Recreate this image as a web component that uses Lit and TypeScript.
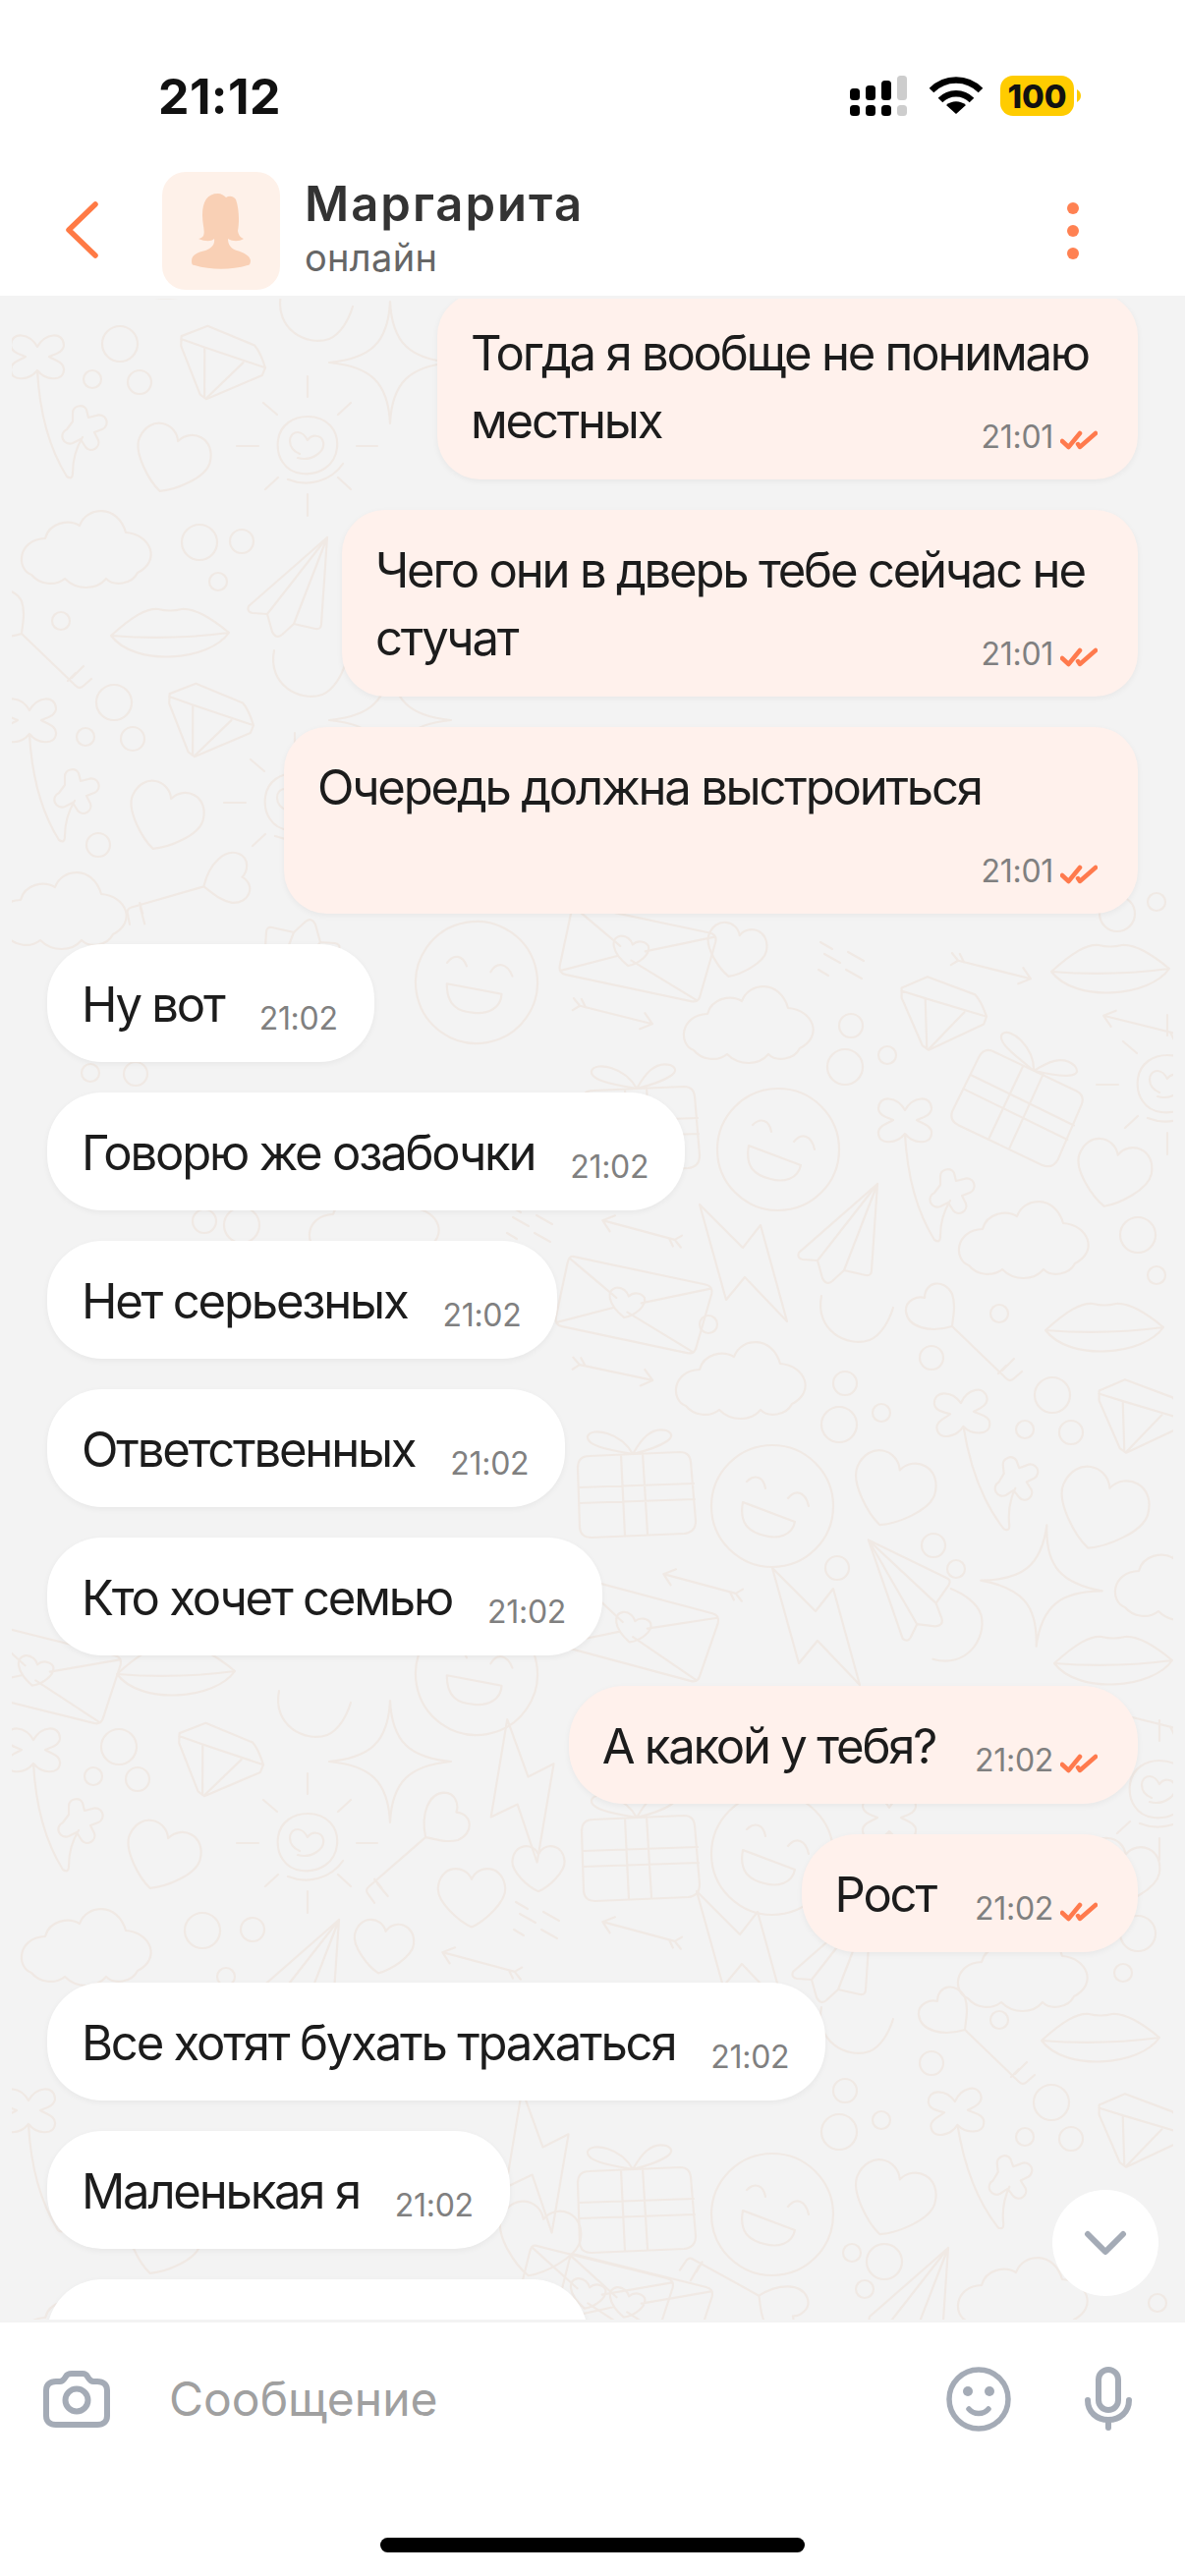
import { LitElement, html, css, svg } from "lit";
import { customElement } from "lit/decorators.js";

type Msg = { out: boolean; lines: string[]; time: string; width?: number };

const MSGS: Msg[] = [
  { out: true, lines: ["Тогда я вообще не понимаю", "местных"], time: "21:01", width: 713 },
  { out: true, lines: ["Чего они в дверь тебе сейчас не", "стучат"], time: "21:01", width: 810 },
  { out: true, lines: ["Очередь должна выстроиться"], time: "21:01", width: 869 },
  { out: false, lines: ["Ну вот"], time: "21:02" },
  { out: false, lines: ["Говорю же озабочки"], time: "21:02" },
  { out: false, lines: ["Нет серьезных"], time: "21:02" },
  { out: false, lines: ["Ответственных"], time: "21:02" },
  { out: false, lines: ["Кто хочет семью"], time: "21:02" },
  { out: true, lines: ["А какой у тебя?"], time: "21:02" },
  { out: true, lines: ["Рост"], time: "21:02" },
  { out: false, lines: ["Все хотят бухать трахаться"], time: "21:02" },
  { out: false, lines: ["Маленькая я"], time: "21:02" },
];

const SHAPES: Record<string, string> = {
  cloud:
    "M-60 26C-76 20-74-10-46-11C-42-27-22-31-11-24C-4-44 28-46 36-17C62-15 72 12 48 24C42 36 24 38 16 30C6 42-14 42-26 30C-36 38-52 36-60 26Z",
  heart:
    "M0-18C-8-36-36-34-38-8C-39 8-14 30 0 36C14 30 39 8 38-8C36-34 8-36 0-18Z",
  smiley:
    "M62 0A62 62 0 1 1-62 0A62 62 0 1 1 62 0ZM-26-25C-18-33-9-30-7-18M16-8C24-18 34-14 37 0M-30-4L23 16C20 30 6 34-8 30C-24 26-34 18-30-4Z",
  gift:
    "M-46-30L46-34Q56-34 57-24L62 36Q62 48 50 49L-44 53Q-55 53-56 43L-58-18Q-58-30-46-30ZM-14-31L-10 51M8-33L13 49M-57 2L60 -2M-57 18L61 14M-2-32C-24-36-50-40-48-50C-44-60-14-54-2-32C6-46 16-60 32-56C46-50 30-40-2-32Z",
  envelope:
    "M-72-36L66-36Q74-36 74-28L70 28Q70 36 62 36L-68 36Q-76 36-76 28L-76-28Q-76-36-72-36ZM72-33L6-4M68 34L-6 8M-74-33L-20-4M-74 33L-20 6M-8 14C-28 4-32-10-22-14C-16-16-10-12-8-8C-4-14 4-14 8-10C12-2 2 10-8 14Z",
  plane:
    "M40-52L-40 18Q-42 24-36 25L-21 26L-16 44Q-12 52-6 47L6 36L28 41Q34 42 34 36ZM40-52L-21 26M40-52L6 36",
  bolt: "M-46-59L-19 38L0 15L43 60L16-38L-2-15Z",
  diamond:
    "M-44-23L-19-37L31-24Q38-18 45-3L43 5L-10 37L-17 33L-43-13ZM-44-20L-19-15L45-3M-19-15L-12 36M22-5L-10 36",
  clover:
    "M0-10C-8-24-26-26-27-12C-27-4-16-2-12 0C-18 4-28 6-27 14C-26 26-8 24 0 14C8 24 26 26 27 14C28 6 18 4 12 0C16-2 27-4 27-12C26-26 8-24 0-10ZM0 14C2 52 10 90 30 122Q36 126 36 118C36 104 40 92 46 82M36 66L36 58A7.5 7.5 0 0 1 50 54L52 62L60 60A7.5 7.5 0 0 1 66 74L58 77L62 85A7.5 7.5 0 0 1 49 92L44 84L36 88A7.5 7.5 0 0 1 30 74Z",
  lips:
    "M-60 0C-38-20-24-28-12-27Q0-24 12-27C26-28 42-18 60-3C40 26-36 32-60 0ZM-60 0Q0 5 60-3",
  key:
    "M23 21C0 28-22 22-24 6C-25-6-12-10-5-8C-5-25 15-28 23-12C27 0 24 10 23 21ZM23 21L78 74Q82 78 86 74L94 67M78 61L70 69M86 54L74 66",
  sun:
    "M0-30C20-30 32-16 30 2C28 20 12 30-6 28C-24 26-32 10-30-6C-28-22-14-30 0-30ZM-20 34C0 42 24 36 36 18M-8 8C-22 2-20-14-10-14C-6-14-2-10 0-6C4-12 14-12 16-4C18 6 4 16-10 12M0-71L0-50M0 49L0 71M-72 0L-50 0M50 0L71 0M-45-44L-31-32M44-44L31-32M-43 44L-30 32M44 44L31 32",
  star: "M0-62C2-20 20-4 62 0C20 4 2 20 0 62C-2 20-20 4-62 0C-20-4-2-20 0-62Z",
  arrow: "M-38 0L38 0M28-9L38 0L27 8M-38 0L-46-6M-32 0L-38-7M-38 0L-44 6",
  moon: "M-31-25C-38 10-5 28 18 20C30 15 38 0 42-13",
  dashes: "M-20-20L-8-13M-16-8L0 1M8-10L24-1M-22 8L-12 14M6 8L22 17",
};

type Item = [string, number, number, number?, number?];

const ITEMS: Item[] = [
  // upper left
  ["lips", 173, 282], ["clover", 38, 363], ["diamond", 225, 371, 8], ["star", 397, 369], ["moon", 317, 325],
  ["sun", 313, 454], ["heart", 175, 466, 20], ["cloud", 92, 559], ["plane", 293, 599], ["lips", 173, 647],
  ["key", -1, 624], ["moon", 310, 687], ["clover", 30, 733], ["diamond", 213, 735, 8], ["star", 397, 733],
  ["heart", 168, 830, 20], ["sun", 300, 817], ["key", 237, 893, 120], ["cloud", 67, 927], ["plane", 305, 985, 180],
  // middle right
  ["smiley", 485, 1000, -10], ["smiley", 792, 1170], ["smiley", 786, 1533], ["cloud", 766, 1043], ["cloud", 758, 1405],
  ["cloud", 1046, 1262], ["cloud", 1205, 1610], ["cloud", 385, 1247], ["diamond", 959, 1033, 6], ["diamond", 1160, 1443, 6],
  ["gift", 1039, 1119, 28], ["gift", 646, 1512], ["gift", 650, 1140], ["lips", 1130, 989], ["lips", 1124, 1354],
  ["lips", 1133, 1693], ["plane", 853, 1257], ["plane", 917, 1624, -68], ["bolt", 758, 1285], ["bolt", 832, 1655],
  ["clover", 921, 1140], ["clover", 979, 1438, -6], ["key", 946, 1329], ["heart", 1133, 1193, 15], ["heart", 909, 1515, 20, 1.1],
  ["heart", 1122, 1535, 20, 1.2], ["heart", 749, 966, 15, 0.8], ["star", 1060, 1614, 5], ["envelope", 650, 971, 12],
  ["envelope", 646, 1329, 12], ["envelope", 652, 1660, 15], ["arrow", 1012, 987, 14], ["arrow", 627, 1033, 14],
  ["arrow", 650, 1252, 195], ["arrow", 627, 1397, 12], ["arrow", 712, 1612, 195], ["arrow", 1160, 1043, 194],
  ["moon", 867, 1344], ["moon", 977, 1660, -85], ["sun", 1188, 1104], ["dashes", 855, 979], ["dashes", 538, 1247],
  // lower right
  ["lips", 1120, 2077], ["key", 959, 2045], ["smiley", 786, 2254], ["gift", 646, 2240], ["gift", 650, 1882],
  ["smiley", 786, 1887], ["moon", 867, 2068], ["bolt", 755, 1984], ["plane", 847, 1989], ["envelope", 646, 2347, 14],
  ["diamond", 1160, 2170, 6], ["clover", 973, 2149, -6], ["heart", 909, 2237, 20, 1.1], ["cloud", 1045, 2337],
  ["cloud", 1045, 2008], ["arrow", 1160, 1750, 194], ["sun", 1180, 1822], ["arrow", 650, 1966, 195], ["heart", 1141, 1905, 15],
  ["clover", 905, 1850], ["plane", 925, 2340], ["key", 800, 2351, 165],
  // lower left
  ["lips", 179, 1704], ["smiley", 485, 1704, -10], ["moon", 315, 1746], ["clover", 34, 1781], ["diamond", 223, 1793, 8],
  ["star", 397, 1793], ["bolt", 533, 1823, 25], ["key", 456, 1849, 95], ["heart", 165, 1888, 20], ["sun", 313, 1876],
  ["heart", 548, 1900, 0, 0.7], ["heart", 480, 1929, 0, 0.9], ["dashes", 545, 1956], ["cloud", 92, 1982],
  ["heart", 390, 1980, 10, 0.8], ["arrow", 487, 1997, 195], ["plane", 305, 2006], ["envelope", 44, 1704, 14],
  ["clover", 29, 2148], ["heart", 548, 2278, 15, 1.1], ["envelope", 606, 2338, 14], ["bolt", 548, 2200, 25],
  ["heart", 165, 2280, 20], ["cloud", 92, 2370],
];

const DOTS: [number, number, number][] = [
  [122, 350, 18], [94, 386, 9], [142, 389, 12], [203, 552, 18], [246, 551, 12], [222, 592, 9], [62, 632, 9],
  [116, 715, 18], [87, 750, 9], [135, 752, 12], [100, 860, 12], [866, 1044, 12], [860, 1086, 18], [903, 1074, 9],
  [721, 1348, 9], [1158, 1257, 18], [1177, 1298, 9], [1017, 1337, 9], [948, 1382, 12], [860, 1408, 12], [854, 1450, 18],
  [897, 1438, 9], [1071, 1420, 18], [1043, 1455, 9], [1090, 1458, 12], [950, 1573, 12], [973, 1597, 9], [852, 1596, 12],
  [1177, 918, 9], [1137, 930, 18], [1017, 2056, 9], [948, 2100, 12], [860, 2128, 12], [854, 2170, 18], [897, 2158, 9],
  [1070, 2140, 18], [1043, 2175, 9], [1090, 2177, 12], [1158, 1968, 18], [1143, 2008, 9], [867, 2293, 9], [900, 2302, 18],
  [880, 2330, 9], [1178, 2344, 9], [121, 1778, 18], [95, 1808, 9], [140, 1811, 12], [206, 1965, 18], [257, 1964, 12],
  [92, 1092, 9], [138, 1093, 12], [208, 1243, 12], [246, 1247, 18], [230, 2012, 9],
];

@customElement("app-root")
export class AppRoot extends LitElement {
  static styles = css`
    :host {
      display: flex;
      flex-direction: column;
      width: 1206px;
      height: 2622px;
      background: #fff;
      font-family: Inter, "Noto Sans", sans-serif;
      color: #1c1c1c;
      overflow: hidden;
    }
    .status {
      height: 175px;
      flex: none;
      box-sizing: border-box;
      padding: 77px 106px 0 161px;
      display: flex;
      justify-content: space-between;
      align-items: flex-start;
    }
    .clock {
      font-size: 50px;
      font-weight: 700;
      line-height: 42px;
      color: #111;
      letter-spacing: 0.4px;
    }
    .sys {
      display: block;
      margin-top: -1px;
    }
    .batt-text {
      font-family: Inter, sans-serif;
      font-size: 33px;
      font-weight: 800;
    }
    .header {
      height: 126px;
      flex: none;
      box-sizing: border-box;
      padding: 0 100px 6px 60px;
      display: flex;
      align-items: flex-start;
    }
    .back {
      width: 45px;
      height: 120px;
      flex: none;
      margin-right: 60px;
    }
    .avatar {
      width: 120px;
      height: 120px;
      flex: none;
      border-radius: 24px;
      background: #fef1e9;
      margin-right: 25px;
    }
    .who {
      flex: 1;
      padding-top: 4px;
    }
    .name {
      font-size: 49px;
      font-weight: 600;
      line-height: 58px;
      color: #333;
      letter-spacing: 2px;
    }
    .sub {
      font-size: 38px;
      line-height: 44px;
      margin-top: 3px;
      color: #666;
      letter-spacing: 0.3px;
    }
    .dots {
      width: 28px;
      height: 120px;
      flex: none;
    }
    .chat {
      height: 2063px;
      flex: none;
      box-sizing: border-box;
      padding: 3px 0;
      background: #f3f3f3;
    }
    .clip {
      position: relative;
      height: 100%;
      overflow: hidden;
    }
    .wall {
      position: absolute;
      left: 12px;
      top: 0;
      fill: none;
      stroke: #f0e9e4;
      stroke-width: 2.2;
      stroke-linejoin: round;
      stroke-linecap: round;
    }
    .list {
      position: relative;
      display: flex;
      flex-direction: column;
      gap: 31px;
      padding: 0 48px;
      margin-top: -6px;
    }
    .bubble {
      box-sizing: border-box;
      height: 120px;
      padding: 27px 37px 24px 35px;
      border-radius: 56px;
      background: #fff;
      box-shadow: 0 2px 6px rgba(0, 0, 0, 0.05);
      align-self: flex-start;
      display: flex;
      gap: 36px;
      align-items: flex-start;
    }
    .bubble.out {
      background: #fff1ec;
      align-self: flex-end;
      padding-left: 34px;
      padding-right: 41px;
      gap: 40px;
    }
    .bubble.tall {
      height: 190px;
      border-radius: 44px;
      display: grid;
      grid-template-rows: 69px 69px;
      gap: 0;
    }
    .bubble.tall .text {
      grid-area: 1 / 1 / 3 / 2;
    }
    .bubble.tall .meta {
      grid-area: 2 / 1 / 3 / 2;
      justify-self: end;
      margin-top: 31px;
    }
    .bubble.stub {
      width: 550px;
    }
    .text {
      font-size: 49px;
      line-height: 69px;
      letter-spacing: -2.2px;
      white-space: nowrap;
      color: #1c1c1c;
    }
    .meta {
      display: flex;
      align-items: center;
      gap: 7px;
      margin-top: 29px;
      height: 40px;
      font-size: 32px;
      line-height: 40px;
      letter-spacing: -0.3px;
      color: #808080;
      white-space: nowrap;
    }
    .check {
      display: block;
      flex: none;
      margin-top: 6px;
    }
    .down {
      position: absolute;
      right: 27px;
      bottom: 24px;
      width: 108px;
      height: 108px;
      border-radius: 50%;
      background: #fff;
      display: flex;
      align-items: center;
      justify-content: center;
    }
    .composer {
      flex: 1;
      display: flex;
      flex-direction: column;
      align-items: center;
    }
    .row {
      width: 100%;
      box-sizing: border-box;
      height: 65px;
      margin-top: 45px;
      padding: 0 54px 0 44px;
      display: flex;
      align-items: center;
    }
    .placeholder {
      flex: 1;
      margin-left: 60px;
      font-size: 48px;
      line-height: 56px;
      color: #a0a0a0;
    }
    .ico {
      display: block;
      flex: none;
    }
    .emoji {
      margin-right: 75px;
    }
    .home {
      width: 432px;
      height: 15px;
      border-radius: 8px;
      background: #000;
      margin-top: 109px;
    }
  `;

  private chk() {
    return html`<svg class="check" width="38" height="20" viewBox="0 0 38 20" fill="none" stroke="#ff7a4d" stroke-width="4.5" stroke-linecap="round" stroke-linejoin="round">
      <path d="M2 11L8.5 17L20 3" /><path d="M18 14L20 17L36 3" />
    </svg>`;
  }

  private bubble(m: Msg) {
    const tall = m.width !== undefined;
    return html`<div
      class="bubble ${m.out ? "out" : ""} ${tall ? "tall" : ""}"
      style=${tall ? `width:${m.width}px` : ""}
    >
      <div class="text">${m.lines.map((l, i) => html`${i ? html`<br />` : ""}${l}`)}</div>
      <div class="meta"><span>${m.time}</span>${m.out ? this.chk() : ""}</div>
    </div>`;
  }

  private wallpaper() {
    return html`<svg class="wall" width="1182" height="2057" viewBox="12 304 1182 2057">
      ${ITEMS.map(
        ([k, x, y, r = 0, s = 1]) =>
          svg`<path d=${SHAPES[k]} transform="translate(${x} ${y}) rotate(${r}) scale(${s})" vector-effect="non-scaling-stroke" />`
      )}
      ${DOTS.map(([x, y, r]) => svg`<circle cx=${x} cy=${y} r=${r} />`)}
    </svg>`;
  }

  render() {
    return html`
      <div class="status">
        <div class="clock">21:12</div>
        <svg class="sys" width="240" height="44" viewBox="0 0 240 44">
          <g fill="#000">
            <rect x="5" y="14" width="10" height="12" rx="3.5" />
            <rect x="21" y="11" width="10" height="15" rx="3.5" />
            <rect x="37" y="6" width="10" height="20" rx="3.5" />
            <rect x="5" y="31" width="10" height="11" rx="3.5" />
            <rect x="21" y="31" width="10" height="11" rx="3.5" />
            <rect x="37" y="31" width="10" height="11" rx="3.5" />
          </g>
          <g fill="#cdcdcd">
            <rect x="53" y="1" width="10" height="25" rx="3.5" />
            <rect x="53" y="31" width="10" height="11" rx="3.5" />
          </g>
          <g fill="none" stroke="#000" stroke-width="6.5">
            <path d="M88 16C102 2 124 2 138 16" />
            <path d="M97 26C106 17 120 17 129 26" />
          </g>
          <path d="M113 40L103 31C109 26 117 26 123 31Z" fill="#000" />
          <rect x="158" y="1" width="75" height="41" rx="13" fill="#ffcc00" />
          <path d="M236 15C239 17 240 19 240 21.5C240 24 239 26 236 28Z" fill="#ffcc00" />
          <text x="195.5" y="33.5" text-anchor="middle" class="batt-text" fill="#111">100</text>
        </svg>
      </div>

      <div class="header">
        <svg class="back" viewBox="0 0 45 120" fill="none" stroke="#ff7a45" stroke-width="5.5" stroke-linecap="round" stroke-linejoin="round">
          <path d="M37 33L10 59L37 85" />
        </svg>
        <svg class="avatar" viewBox="0 0 120 120">
          <path
            fill="#f9d0b5"
            d="M57 22C46 22 41 30 41 44C41 54 44 60 42 65C41 67 38 68 37 68C44 71 50 71 53 68C54 74 50 78 44 80C36 82 30 84 30 91C30 94 31 95 33 95C50 100 70 100 87 95C89 95 90 93 90 90C89 85 83 82 76 80C70 78 67 74 67 68C72 71 78 71 83 68C80 67 78 65 77 60C79 50 78 36 75 28C72 24 68 24 65 26C63 24 60 22 57 22Z"
          />
        </svg>
        <div class="who">
          <div class="name">Маргарита</div>
          <div class="sub">онлайн</div>
        </div>
        <svg class="dots" viewBox="0 0 28 120" fill="#ff8152">
          <circle cx="14" cy="37" r="6" /><circle cx="14" cy="60" r="6" /><circle cx="14" cy="83" r="6" />
        </svg>
      </div>

      <div class="chat">
        <div class="clip">
          ${this.wallpaper()}
          <div class="list">
            ${MSGS.map((m) => this.bubble(m))}
            <div class="bubble stub"></div>
          </div>
          <div class="down">
            <svg width="48" height="32" viewBox="0 0 48 32" fill="none" stroke="#a4abb6" stroke-width="6" stroke-linecap="round" stroke-linejoin="round">
              <path d="M6 7L24 25L42 7" />
            </svg>
          </div>
        </div>
      </div>

      <div class="composer">
        <div class="row">
          <svg class="ico" width="68" height="58" viewBox="0 0 68 58" fill="none" stroke="#a4abb6" stroke-width="6" stroke-linejoin="round">
            <path d="M3 20C3 14 7 11 13 11H17C20 11 21 9 23 6C24 4 26 3 29 3H40C42 3 44 4 45 6C47 9 48 11 51 11H55C61 11 65 14 65 20V46C65 52 61 55 55 55H13C7 55 3 52 3 46Z" />
            <circle cx="34" cy="30" r="11.5" />
          </svg>
          <div class="placeholder">Сообщение</div>
          <svg class="ico emoji" width="66" height="66" viewBox="0 0 66 66" fill="none" stroke="#a4abb6" stroke-width="5.5" stroke-linecap="round">
            <circle cx="33" cy="33" r="30" />
            <circle cx="22" cy="25" r="5" fill="#a4abb6" stroke="none" />
            <circle cx="44" cy="25" r="5" fill="#a4abb6" stroke="none" />
            <path d="M23 43C28 49 38 49 43 43" />
          </svg>
          <svg class="ico" width="48" height="65" viewBox="0 0 48 65" fill="none" stroke="#a4abb6" stroke-width="6" stroke-linecap="round">
            <rect x="14" y="3" width="20" height="41" rx="10" />
            <path d="M3 34C3 46 12 54 24 54C36 54 45 46 45 34" />
            <path d="M24 54V62" />
          </svg>
        </div>
        <div class="home"></div>
      </div>
    `;
  }
}
